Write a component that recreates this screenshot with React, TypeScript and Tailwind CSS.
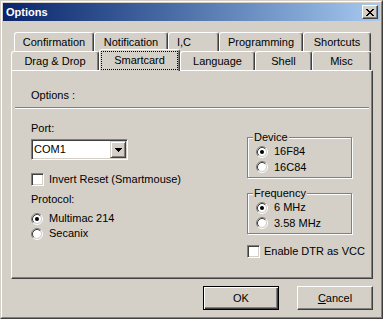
import React from 'react';

const Radio = ({ checked }: { checked?: boolean }) => (
  <svg width="12" height="12" viewBox="0 0 12 12" className="shrink-0">
    <circle cx="6" cy="6" r="4" fill="#ffffff" />
    <path d="M2.11 9.89A5.5 5.5 0 0 1 9.89 2.11" fill="none" stroke="#808080" />
    <path d="M9.89 2.11A5.5 5.5 0 0 1 2.11 9.89" fill="none" stroke="#ffffff" />
    <path d="M2.82 9.18A4.5 4.5 0 0 1 9.18 2.82" fill="none" stroke="#404040" />
    <path d="M9.18 2.82A4.5 4.5 0 0 1 2.82 9.18" fill="none" stroke="#d4d0c8" />
    {checked && <circle cx="6" cy="6" r="2" fill="#000000" />}
  </svg>
);

const CheckBox = () => (
  <div className="w-[13px] h-[13px] shrink-0 bg-white border border-t-[#808080] border-l-[#808080] border-r-white border-b-white shadow-[inset_1px_1px_#404040,inset_-1px_-1px_#d4d0c8]" />
);

const RadioRow = ({ label, checked, h }: { label: string; checked?: boolean; h: string }) => (
  <div className={`${h} flex items-center gap-[6px] whitespace-nowrap`}>
    <Radio checked={checked} />
    <span>{label}</span>
  </div>
);

const Tab = ({ label, w, extra = 'justify-center' }: { label: React.ReactNode; w: string; extra?: string }) => (
  <div
    className={`${w} ${extra} h-[19px] flex items-center pt-[1px] border-t border-l border-r border-t-white border-l-white border-r-[#404040] rounded-t-[3px] shadow-[inset_-1px_0_#808080] bg-[#d4d0c8] whitespace-nowrap`}
  >
    {label}
  </div>
);

const App: React.FC = () => {
  return (
    <div className="w-[383px] h-[319px] bg-[#d4d0c8] border border-t-[#d4d0c8] border-l-[#d4d0c8] border-r-[#404040] border-b-[#404040] font-['Liberation_Sans',Arial,sans-serif] text-[11px] leading-[13px] text-black select-none">
      <div className="h-full flex flex-col border border-t-white border-l-white border-r-[#808080] border-b-[#808080] p-[1px]">
        {/* Title bar */}
        <div className="h-[18px] shrink-0 flex items-center pl-[3px] pr-[2px] bg-linear-to-r from-[#0a246a] to-[#a6caf0]">
          <span className="text-white font-bold text-[11px]">Options</span>
          <div className="ml-auto w-[16px] h-[14px] flex items-center justify-center bg-[#d4d0c8] border border-t-white border-l-white border-r-[#404040] border-b-[#404040] shadow-[inset_-1px_-1px_#808080]">
            <svg width="8" height="7" viewBox="0 0 8 7" shapeRendering="crispEdges">
              <path
                d="M0 0h2v1H0zM6 0h2v1H6zM1 1h2v1H1zM5 1h2v1H5zM2 2h4v1H2zM3 3h2v1H3zM2 4h4v1H2zM1 5h2v1H1zM5 5h2v1H5zM0 6h2v1H0zM6 6h2v1H6z"
                fill="#000"
              />
            </svg>
          </div>
        </div>

        {/* Tabs */}
        <div className="mt-[11px] ml-[8px] flex flex-col">
          <div className="flex pl-[3px]">
            <Tab w="w-[80px]" label="Confirmation" />
            <Tab w="w-[74px]" label="Notification" />
            <Tab w="w-[51px]" label="I,C" extra="justify-start pl-[8px]" />
            <Tab w="w-[84px]" label="Programming" />
            <Tab w="w-[68px]" label="Shortcuts" />
          </div>
          <div className="flex">
            <Tab w="w-[88px]" label="Drag & Drop" />
            <div className="relative z-10 w-[81px] h-[22px] -mt-[2px] -mb-[1px] flex border-t border-l border-r border-t-white border-l-white border-r-[#404040] rounded-t-[3px] shadow-[inset_-1px_0_#808080] bg-[#d4d0c8]">
              <div className="flex-1 mx-[1px] mt-[1px] mb-[1px] flex items-center justify-center border border-dotted border-black">
                Smartcard
              </div>
            </div>
            <Tab w="w-[75px]" label="Language" />
            <Tab w="w-[57px]" label="Shell" />
            <Tab w="w-[59px]" label="Misc" />
          </div>

          {/* Panel */}
          <div className="w-[362px] h-[209px] flex flex-col border border-t-white border-l-white border-r-[#404040] border-b-[#404040] shadow-[inset_-1px_-1px_#808080]">
            <div className="pt-[18px] pl-[19px]">Options :</div>
            <div className="mt-[5px] mx-[3px] h-[2px] border-t border-b border-t-[#808080] border-b-white" />

            <div className="flex">
              {/* Left column */}
              <div className="w-[235px] pl-[19px] flex flex-col">
                <div className="mt-[13px]">Port:</div>
                <div className="mt-[4px] w-[97px] h-[21px] flex items-center bg-white border border-t-[#808080] border-l-[#808080] border-r-white border-b-white shadow-[inset_1px_1px_#404040,inset_-1px_-1px_#d4d0c8] pl-[2px] pr-[1px]">
                  <span>COM1</span>
                  <div className="ml-auto w-[16px] h-[17px] flex items-center justify-center bg-[#d4d0c8] border border-t-[#d4d0c8] border-l-[#d4d0c8] border-r-[#404040] border-b-[#404040] shadow-[inset_1px_1px_#ffffff,inset_-1px_-1px_#808080]">
                    <svg width="7" height="4" viewBox="0 0 7 4" shapeRendering="crispEdges">
                      <path d="M0 0h7v1H0zM1 1h5v1H1zM2 2h3v1H2zM3 3h1v1H3z" fill="#000" />
                    </svg>
                  </div>
                </div>
                <div className="mt-[13px] h-[13px] flex items-center gap-[5px] whitespace-nowrap">
                  <CheckBox />
                  <span>Invert Reset (Smartmouse)</span>
                </div>
                <div className="mt-[7px]">Protocol:</div>
                <div className="mt-[5px] flex flex-col">
                  <RadioRow h="h-[15px]" label="Multimac 214" checked />
                  <RadioRow h="h-[15px]" label="Secanix" />
                </div>
              </div>

              {/* Right column */}
              <div className="w-[105px] flex flex-col">
                <fieldset className="mt-[21px] px-[5px] pb-[2px] border border-[#808080] shadow-[inset_1px_1px_#ffffff,1px_1px_#ffffff]">
                  <legend className="px-[1px] leading-[14px] bg-[#d4d0c8]">Device</legend>
                  <div className="pl-[3px] flex flex-col">
                    <RadioRow h="h-[15px]" label="16F84" checked />
                    <RadioRow h="h-[16px]" label="16C84" />
                  </div>
                </fieldset>
                <fieldset className="mt-[8px] px-[5px] pb-[2px] border border-[#808080] shadow-[inset_1px_1px_#ffffff,1px_1px_#ffffff]">
                  <legend className="px-[1px] leading-[14px] bg-[#d4d0c8]">Frequency</legend>
                  <div className="pl-[3px] flex flex-col">
                    <RadioRow h="h-[15px]" label="6 MHz" checked />
                    <RadioRow h="h-[16px]" label="3.58 MHz" />
                  </div>
                </fieldset>
                <div className="mt-[11px] h-[13px] flex items-center gap-[4px] whitespace-nowrap">
                  <CheckBox />
                  <span>Enable DTR as VCC</span>
                </div>
              </div>
            </div>
          </div>
        </div>

        {/* Buttons */}
        <div className="mt-[7px] flex justify-end gap-[18px] pr-[7px]">
          <div className="w-[76px] h-[24px] flex items-center justify-center border border-black shadow-[inset_1px_1px_#ffffff,inset_-1px_-1px_#404040,inset_-2px_-2px_#808080]">
            OK
          </div>
          <div className="w-[76px] h-[24px] flex items-center justify-center border border-t-white border-l-white border-r-[#404040] border-b-[#404040] shadow-[inset_-1px_-1px_#808080]">
            <span>
              <span className="underline">C</span>ancel
            </span>
          </div>
        </div>
      </div>
    </div>
  );
};

export default App;
